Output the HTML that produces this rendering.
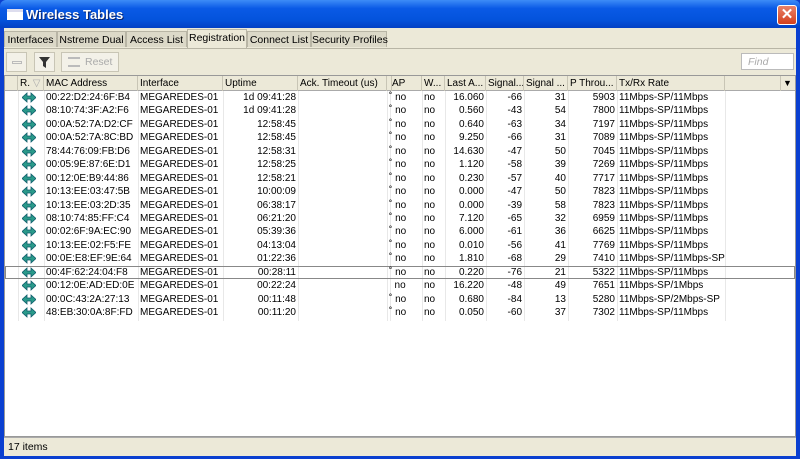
<!DOCTYPE html>
<html><head><style>
*{margin:0;padding:0;box-sizing:border-box}
body{width:800px;height:459px;overflow:hidden;background:#0a3fd0;font-family:"Liberation Sans",sans-serif;font-size:10px;color:#000;position:relative}
#title{position:absolute;left:0;top:0;width:800px;height:28px;background:linear-gradient(#3d8cf7,#0a5ae6 30%,#0453dc 70%,#0340c4);border-radius:6px 6px 0 0}
#title .ic{position:absolute;left:7px;top:9px;width:16px;height:11px;background:#fff;border-top:3px solid #dde}
#title .t{position:absolute;left:26px;top:7px;color:#fff;font-weight:bold;font-size:13px;text-shadow:1px 1px #0a246a}
#close{position:absolute;left:777px;top:5px;width:20px;height:20px;background:linear-gradient(#e8826a,#d4401e);border:1px solid #fff;border-radius:3px;color:#fff;font-weight:bold;font-size:15px;text-align:center;line-height:18px}
#win{position:absolute;left:4px;top:28px;width:792px;height:428px;background:#ece9d8}
.tab{position:absolute;top:3px;height:16px;border:1px solid #b8b5a5;border-bottom:none;background:#dcd9c8;padding:2px 0;font-size:10.5px;white-space:nowrap;text-align:center}
.tab.sel{top:1px;height:19px;background:#ece9d8}
.btn{position:absolute;top:24px;height:20px;border:1px solid #c8c5b5;background:#f3f1e8}
#find{position:absolute;left:737px;top:25px;width:53px;height:17px;background:#fff;border:1px solid #bbb;color:#aaa;font-style:italic;padding:2px 6px;font-size:10.5px}
#tbl{position:absolute;left:0;top:47px;width:792px;height:362px;background:#fff;border:1px solid #999}
#hdr{position:absolute;left:0;top:0;height:15px;width:790px;background:#ece9d8;border-bottom:1px solid #aaa}
.h{position:absolute;top:0;height:15px;border-right:1px solid #c8c5b5;padding:2px 2px;white-space:nowrap;overflow:hidden}
.row{position:absolute;left:0;width:790px;height:13.44px}
.c{position:absolute;top:0;height:13.44px;line-height:13px;white-space:nowrap;overflow:hidden;padding:0 2px}
.r{text-align:right}
.vl{position:absolute;top:15px;height:230px;border-left:1px solid #e8e8e8}
#status{position:absolute;left:0;top:409px;width:792px;height:18px;border-top:1px solid #aaa;background:#ece9d8;padding:3px 4px;font-size:10.5px}
</style></head><body>
<div id="title"><div class="ic"></div><div class="t">Wireless Tables</div><div id="close">✕</div></div>
<div id="win">
<div class="tab" style="left:0;width:53px">Interfaces</div>
<div class="tab" style="left:53px;width:69px">Nstreme Dual</div>
<div class="tab" style="left:122px;width:61px">Access List</div>
<div class="tab sel" style="left:183px;width:60px">Registration</div>
<div class="tab" style="left:243px;width:64px">Connect List</div>
<div class="tab" style="left:307px;width:76px">Security Profiles</div>
<div style="position:absolute;left:0;top:20px;width:792px;border-top:1px solid #b8b5a5"></div>
<div class="btn" style="left:2px;width:21px"><div style="position:absolute;left:5px;top:8px;width:10px;height:3px;border:1px solid #bbb"></div></div>
<div class="btn" style="left:30px;width:21px"><svg width="19" height="18" viewBox="0 0 19 18"><path d="M4 4h11l-4 5v6l-3-2v-4z" fill="#333"/></svg></div>
<div class="btn" style="left:57px;width:58px;color:#aaa;padding:3px 0 0 23px;font-size:10.5px"><span style="position:absolute;left:6px;top:4px;width:12px;height:10px;border-top:2px solid #bbb;border-bottom:2px solid #bbb"></span>Reset</div>
<div id="find">Find</div>
<div id="tbl">
<div id="hdr">
<div class="h" style="left:0;width:13px"></div>
<div class="h" style="left:13px;width:26px">R. <span style="color:#aaa">▽</span></div>
<div class="h" style="left:39px;width:94px">MAC Address</div>
<div class="h" style="left:133px;width:85px">Interface</div>
<div class="h" style="left:218px;width:75px">Uptime</div>
<div class="h" style="left:293px;width:89px">Ack. Timeout (us)</div>
<div class="h" style="left:382px;width:3px"></div>
<div class="h" style="left:385px;width:32px">AP</div>
<div class="h" style="left:417px;width:23px">W...</div>
<div class="h" style="left:440px;width:41px">Last A...</div>
<div class="h" style="left:481px;width:38px">Signal...</div>
<div class="h" style="left:519px;width:44px">Signal ...</div>
<div class="h" style="left:563px;width:49px">P Throu...</div>
<div class="h" style="left:612px;width:108px">Tx/Rx Rate</div>
<div class="h" style="left:720px;width:56px"></div>
<div class="h" style="left:776px;width:14px;border:none;font-size:9px">▼</div>
</div>
<div id="rows"></div>
</div>
<div id="status">17 items</div>
</div>
<script>
var d=[["00:22:D2:24:6F:B4","1d 09:41:28","16.060","-66","31","5903","11Mbps-SP/11Mbps"],
["08:10:74:3F:A2:F6","1d 09:41:28","0.560","-43","54","7800","11Mbps-SP/11Mbps"],
["00:0A:52:7A:D2:CF","12:58:45","0.640","-63","34","7197","11Mbps-SP/11Mbps"],
["00:0A:52:7A:8C:BD","12:58:45","9.250","-66","31","7089","11Mbps-SP/11Mbps"],
["78:44:76:09:FB:D6","12:58:31","14.630","-47","50","7045","11Mbps-SP/11Mbps"],
["00:05:9E:87:6E:D1","12:58:25","1.120","-58","39","7269","11Mbps-SP/11Mbps"],
["00:12:0E:B9:44:86","12:58:21","0.230","-57","40","7717","11Mbps-SP/11Mbps"],
["10:13:EE:03:47:5B","10:00:09","0.000","-47","50","7823","11Mbps-SP/11Mbps"],
["10:13:EE:03:2D:35","06:38:17","0.000","-39","58","7823","11Mbps-SP/11Mbps"],
["08:10:74:85:FF:C4","06:21:20","7.120","-65","32","6959","11Mbps-SP/11Mbps"],
["00:02:6F:9A:EC:90","05:39:36","6.000","-61","36","6625","11Mbps-SP/11Mbps"],
["10:13:EE:02:F5:FE","04:13:04","0.010","-56","41","7769","11Mbps-SP/11Mbps"],
["00:0E:E8:EF:9E:64","01:22:36","1.810","-68","29","7410","11Mbps-SP/11Mbps-SP"],
["00:4F:62:24:04:F8","00:28:11","0.220","-76","21","5322","11Mbps-SP/11Mbps"],
["00:12:0E:AD:ED:0E","00:22:24","16.220","-48","49","7651","11Mbps-SP/1Mbps"],
["00:0C:43:2A:27:13","00:11:48","0.680","-84","13","5280","11Mbps-SP/2Mbps-SP"],
["48:EB:30:0A:8F:FD","00:11:20","0.050","-60","37","7302","11Mbps-SP/11Mbps"]];
var h='';
[13,39,133,218,293,382,385,417,440,481,519,563,612,720].forEach(function(x){h+='<div class="vl" style="left:'+x+'px"></div>'});
var ic='<svg width="14" height="11" viewBox="0 0 14 11" style="position:absolute;left:4px;top:1px"><path d="M0 5.5L5 1v3h4V1l5 4.5L9 10V7H5v3z" fill="#2a9a8a" stroke="#0d5a6a" stroke-width=".8"/></svg>';
d.forEach(function(r,i){var y=15+i*13.44;var s=i==13?'outline:1px solid #888;outline-offset:-1px;':'';
h+='<div class="row" style="top:'+y+'px;'+s+'">'+
'<div class="c" style="left:13px;width:26px">'+ic+'</div>'+
'<div class="c" style="left:39px;width:94px">'+r[0]+'</div>'+
'<div class="c" style="left:133px;width:85px">MEGAREDES-01</div>'+
'<div class="c r" style="left:218px;width:75px">'+r[1]+'</div>'+
'<div class="c" style="left:382px;width:35px">'+(i==14?'&nbsp;':'˚')+' no</div>'+
'<div class="c" style="left:417px;width:23px">no</div>'+
'<div class="c r" style="left:440px;width:41px">'+r[2]+'</div>'+
'<div class="c r" style="left:481px;width:38px">'+r[3]+'</div>'+
'<div class="c r" style="left:519px;width:44px">'+r[4]+'</div>'+
'<div class="c r" style="left:563px;width:49px">'+r[5]+'</div>'+
'<div class="c" style="left:612px;width:108px">'+r[6]+'</div></div>';});
document.getElementById('rows').innerHTML=h;
</script>
</body></html>
